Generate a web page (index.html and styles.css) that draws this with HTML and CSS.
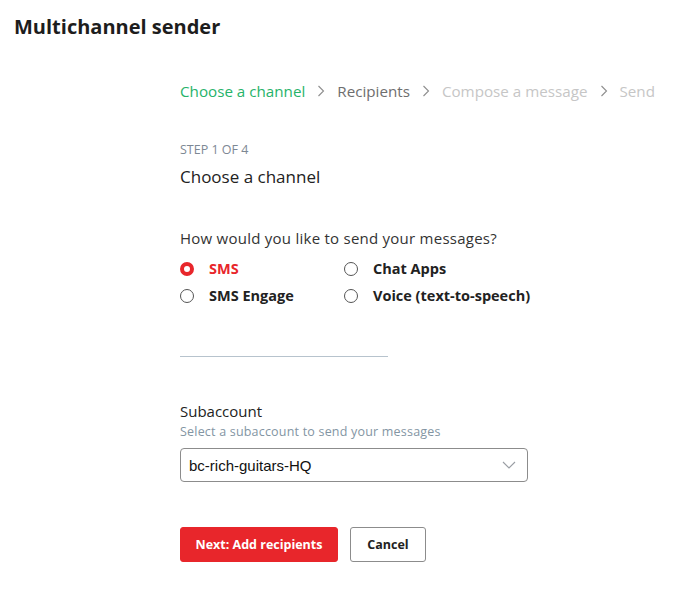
FILE: index.html
```html
<!DOCTYPE html>
<html>
<head>
<meta charset="utf-8">
<link rel="stylesheet" href="styles.css">
</head>
<body>
<h1 class="title">Multichannel sender</h1>
<main class="content">
  <nav class="crumbs">
    <span class="crumb active">Choose a channel</span>
    <svg class="sep" width="8" height="12" viewBox="0 0 8 12"><path d="M1.5 1l5 5-5 5" fill="none" stroke="#8e8e8e" stroke-width="1.1"/></svg>
    <span class="crumb next">Recipients</span>
    <svg class="sep" width="8" height="12" viewBox="0 0 8 12"><path d="M1.5 1l5 5-5 5" fill="none" stroke="#8e8e8e" stroke-width="1.1"/></svg>
    <span class="crumb later">Compose a message</span>
    <svg class="sep" width="8" height="12" viewBox="0 0 8 12"><path d="M1.5 1l5 5-5 5" fill="none" stroke="#8e8e8e" stroke-width="1.1"/></svg>
    <span class="crumb later">Send</span>
  </nav>
  <div class="step">STEP 1 OF 4</div>
  <h2 class="step-title">Choose a channel</h2>
  <p class="question">How would you like to send your messages?</p>
  <div class="radios">
    <label class="radio checked"><span class="dot"></span>SMS</label>
    <label class="radio"><span class="dot"></span>Chat Apps</label>
    <label class="radio"><span class="dot"></span>SMS Engage</label>
    <label class="radio"><span class="dot"></span>Voice (text-to-speech)</label>
  </div>
  <hr class="divider">
  <div class="field">
    <div class="field-label">Subaccount</div>
    <div class="field-help">Select a subaccount to send your messages</div>
    <div class="select">
      <span>bc-rich-guitars-HQ</span>
      <svg class="chev" width="14" height="8" viewBox="0 0 14 8"><path d="M1 1l6 6 6-6" fill="none" stroke="#9a9ea4" stroke-width="1.1"/></svg>
    </div>
  </div>
  <div class="actions">
    <button class="btn primary">Next: Add recipients</button>
    <button class="btn secondary">Cancel</button>
  </div>
</main>
</body>
</html>
```
FILE: styles.css
```css
* { box-sizing: border-box; }
body {
  margin: 0;
  background: #fff;
  font-family: "Open Sans", "Noto Sans", sans-serif;
  color: #222;
}
.title {
  margin: 0;
  padding: 14px 0 0 14px;
  font-size: 20px;
  font-weight: 700;
  line-height: 26px;
  color: #1d1d1d;
}
.content {
  margin-left: 180px;
  padding-top: 42px;
}
.crumbs {
  display: flex;
  align-items: center;
  font-size: 15.2px;
  line-height: 18px;
  white-space: nowrap;
}
.crumb.active { color: #26b36a; }
.crumb.next { color: #6e6e6e; }
.crumb.later { color: #c6c6c6; }
.sep {
  margin: 0 12px 0 12px;
  flex: none;
}
.step {
  margin-top: 42px;
  font-size: 12.5px;
  color: #7d8894;
  line-height: 16px;
}
.step-title {
  margin: 8px 0 0;
  font-size: 17px;
  font-weight: 400;
  line-height: 22px;
  color: #222;
}
.question {
  margin: 41px 0 0;
  font-size: 15px;
  letter-spacing: 0.25px;
  line-height: 18px;
  color: #333;
}
.radios {
  margin-top: 13px;
  display: grid;
  grid-template-columns: 164px auto;
  row-gap: 9px;
  justify-content: start;
}
.radio {
  display: flex;
  align-items: center;
  font-size: 14.5px;
  font-weight: 700;
  line-height: 18px;
  color: #222;
}
.dot {
  width: 14px;
  height: 14px;
  border: 1px solid #555;
  border-radius: 50%;
  margin-right: 15px;
  flex: none;
}
.radio.checked { color: #e8262b; }
.radio.checked .dot {
  border: 4px solid #e8262b;
  background: #fff;
}
.divider {
  margin: 51px 0 0;
  width: 208px;
  border: 0;
  border-top: 1px solid #b7c3cd;
}
.field { margin-top: 44px; }
.field-label {
  font-size: 15px;
  line-height: 20px;
  color: #222;
}
.field-help {
  margin-top: 3px;
  font-size: 12.5px;
  letter-spacing: 0.2px;
  line-height: 16px;
  color: #8395a3;
}
.select {
  margin-top: 8px;
  width: 348px;
  height: 34px;
  border: 1px solid #8c8c8c;
  border-radius: 4px;
  display: flex;
  align-items: center;
  justify-content: space-between;
  padding: 0 11px 0 8px;
  font-family: "Liberation Sans", Arial, sans-serif;
  font-size: 15px;
  color: #111;
}
.actions {
  margin-top: 45px;
  display: flex;
  gap: 12px;
}
.btn {
  height: 35px;
  border-radius: 3px;
  font-family: "Open Sans", "Noto Sans", sans-serif;
  font-size: 12.5px;
  font-weight: 700;
  padding: 0;
  cursor: pointer;
}
.primary {
  background: #e8262b;
  color: #fff;
  border: 1px solid #e8262b;
  width: 158px;
}
.secondary {
  background: #fff;
  color: #222;
  border: 1px solid #8c8c8c;
  width: 76px;
}
```
